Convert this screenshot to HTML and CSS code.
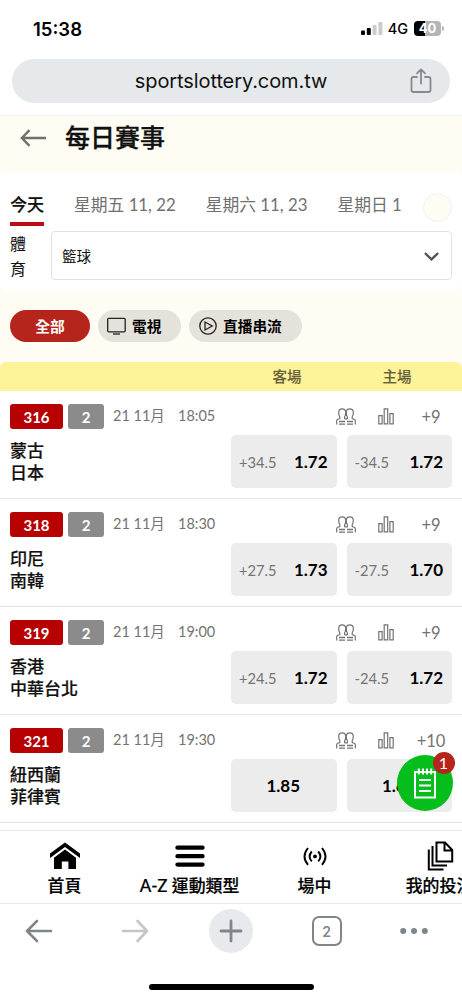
FILE: index.html
```
<!DOCTYPE html>
<html lang="zh-TW">
<head>
    <meta charset="UTF-8">
    <meta name="viewport" content="width=device-width, initial-scale=1.0">
    <title>每日賽事</title>
    <link rel="stylesheet" href="styles.css">
</head>
<body>
    <!-- Shared icons -->
    <svg class="sprite">
        <symbol id="icon-people" viewBox="0 0 20 17">
            <path d="M.7 16.500v-3.700q0-1.200 1.200-1.600l1.900-.6V8.800C3 7.900 2.700 6.500 2.700 4.600 2.700 2 4 .8 6.200.8s3.500 1.200 3.500 3.800c0 1.900-.3 3.300-1.100 4.200v1.800l1.400.5 1.400-.5V8.800c-.8-.9-1.100-2.300-1.100-4.200 0-2.600 1.300-3.800 3.500-3.800s3.500 1.200 3.500 3.800c0 1.900-.3 3.300-1.100 4.200v1.800l1.900.6q1.200.4 1.200 1.600v3.700" fill="none" stroke="currentColor" stroke-width="1.200"/>
            <path d="M3 13.500h6M3 16.200h6M11 13.500h6M11 16.200h6" fill="none" stroke="currentColor" stroke-width="1.300"/>
        </symbol>
        <symbol id="icon-stats" viewBox="0 0 16 17">
            <path d="M.8 7.700h3.300v8.200H.8zM6.200.8h3.500v15.100H6.200zM11.900 5.700h3.300v10.200h-3.300z" fill="none" stroke="currentColor" stroke-width="1.200"/>
        </symbol>
    </svg>

    <div class="phone">
        <div class="status-bar">
            <span class="clock">15:38</span>
            <div class="status-right">
                <svg width="22" height="14" viewBox="0 0 22 14">
                    <rect x="0" y="8.500" width="4" height="4.500" rx="1"/>
                    <rect x="5.800" y="6" width="4" height="7" rx="1"/>
                    <rect x="11.600" y="3" width="4" height="10" rx="1" fill="#ccc"/>
                    <rect x="17.400" y="0" width="4" height="13" rx="1" fill="#ccc"/>
                </svg>
                <span class="network">4G</span>
                <span class="battery">40</span>
                <span class="battery-tip"></span>
            </div>
        </div>

        <div class="address-bar">
            <span>sportslottery.com.tw</span>
            <svg class="share" width="22" height="26" viewBox="0 0 22 26" fill="none" stroke="#858a90" stroke-width="1.800" stroke-linecap="round" stroke-linejoin="round">
                <path d="M7 9H3.500Q1.500 9 1.500 11v11q0 2 2 2h15q2 0 2-2V11q0-2-2-2H15M11 15.500V1.500M7 5.300l4-3.900 4 3.900"/>
            </svg>
        </div>

        <main class="page">
            <header class="page-header">
                <svg width="27" height="18" viewBox="0 0 27 18" fill="none" stroke="#706f6a" stroke-width="2.400">
                    <path d="M26 9H2M9.500 1.200L1.900 9l7.600 7.800"/>
                </svg>
                <h1>每日賽事</h1>
            </header>

            <section class="panel">
                <div class="tabs">
                    <span class="tab active">今天</span>
                    <span class="tab">星期五 11, 22</span>
                    <span class="tab">星期六 11, 23</span>
                    <span class="tab">星期日 1</span>
                    <span class="tab-next"></span>
                </div>
                <div class="sport">
                    <label>體育</label>
                    <div class="select">
                        <span>籃球</span>
                        <svg width="15" height="9" viewBox="0 0 15 9" fill="none" stroke="#555" stroke-width="2.400">
                            <path d="M.9 1l6.600 6.400L14.100 1"/>
                        </svg>
                    </div>
                </div>
            </section>

            <div class="filters">
                <span class="pill pill-all">全部</span>
                <span class="pill pill-tv">
                    <svg width="19" height="18" viewBox="0 0 19 18" fill="none" stroke="#222" stroke-width="1.300">
                        <rect x=".7" y="1.300" width="17.500" height="13.500" rx="1"/>
                        <path d="M6 17h7"/>
                    </svg>
                    電視
                </span>
                <span class="pill pill-live">
                    <svg width="18" height="18" viewBox="0 0 18 18" fill="none" stroke="#222" stroke-width="1.300">
                        <circle cx="9" cy="9" r="8.200"/>
                        <path d="M6 5v8l7.200-4z"/>
                    </svg>
                    直播串流
                </span>
            </div>

            <div class="table-head">
                <span>客場</span>
                <span>主場</span>
            </div>

            <div class="matches">
                <article class="match">
                    <div class="match-top">
                        <span class="code">316</span>
                        <span class="min">2</span>
                        <span class="date">21 11月</span>
                        <span class="time">18:05</span>
                        <svg class="people"><use href="#icon-people"/></svg>
                        <svg class="stats"><use href="#icon-stats"/></svg>
                        <span class="more">+9</span>
                    </div>
                    <div class="match-main">
                        <div class="teams">蒙古<br>日本</div>
                        <div class="odd"><span>+34.5</span><b>1.72</b></div>
                        <div class="odd"><span>-34.5</span><b>1.72</b></div>
                    </div>
                </article>

                <article class="match">
                    <div class="match-top">
                        <span class="code">318</span>
                        <span class="min">2</span>
                        <span class="date">21 11月</span>
                        <span class="time">18:30</span>
                        <svg class="people"><use href="#icon-people"/></svg>
                        <svg class="stats"><use href="#icon-stats"/></svg>
                        <span class="more">+9</span>
                    </div>
                    <div class="match-main">
                        <div class="teams">印尼<br>南韓</div>
                        <div class="odd"><span>+27.5</span><b>1.73</b></div>
                        <div class="odd"><span>-27.5</span><b>1.70</b></div>
                    </div>
                </article>

                <article class="match">
                    <div class="match-top">
                        <span class="code">319</span>
                        <span class="min">2</span>
                        <span class="date">21 11月</span>
                        <span class="time">19:00</span>
                        <svg class="people"><use href="#icon-people"/></svg>
                        <svg class="stats"><use href="#icon-stats"/></svg>
                        <span class="more">+9</span>
                    </div>
                    <div class="match-main">
                        <div class="teams">香港<br>中華台北</div>
                        <div class="odd"><span>+24.5</span><b>1.72</b></div>
                        <div class="odd"><span>-24.5</span><b>1.72</b></div>
                    </div>
                </article>

                <article class="match">
                    <div class="match-top">
                        <span class="code">321</span>
                        <span class="min">2</span>
                        <span class="date">21 11月</span>
                        <span class="time">19:30</span>
                        <svg class="people"><use href="#icon-people"/></svg>
                        <svg class="stats"><use href="#icon-stats"/></svg>
                        <span class="more">+10</span>
                    </div>
                    <div class="match-main">
                        <div class="teams">紐西蘭<br>菲律賓</div>
                        <div class="odd single"><b>1.85</b></div>
                        <div class="odd single"><b>1.60</b></div>
                    </div>
                </article>
            </div>
        </main>

        <nav class="site-nav">
            <div class="nav-item">
                <svg width="30" height="30" viewBox="0 0 30 30">
                    <path d="M15 1.500L0 12.600v4.300L15 5.900l15 11v-4.300z"/>
                    <path d="M15 8.600L4 16.700V28h7.800v-7.500h6.600V28H26V16.700z"/>
                </svg>
                <span>首頁</span>
            </div>
            <div class="nav-item">
                <svg width="30" height="30" viewBox="0 0 30 30" fill="none" stroke="#000" stroke-width="4.200" stroke-linecap="round">
                    <path d="M2.400 6.700h25.200M2.400 15.200h25.200M2.400 23.600h25.200"/>
                </svg>
                <span>A-Z 運動類型</span>
            </div>
            <div class="nav-item">
                <svg width="30" height="30" viewBox="0 0 30 30" fill="none" stroke="#000" stroke-width="1.900">
                    <circle cx="15" cy="15.400" r="1.900" fill="#000" stroke="none"/>
                    <path d="M11.800 10.500q-4.400 4.900 0 9.800M18.200 10.500q4.400 4.900 0 9.800M8 7q-7 8.400 0 16.800M22 7q7 8.400 0 16.800"/>
                </svg>
                <span>場中</span>
            </div>
            <div class="nav-item">
                <svg width="30" height="30" viewBox="0 0 30 30" fill="none" stroke="#000" stroke-width="2">
                    <path d="M11.500 1.500H20l7.200 7.500v11.500H11.500zM19.500 1.500v8h7.700M7.500 5v19.500H22M3.800 8.500v20H18.500"/>
                </svg>
                <span>我的投注</span>
            </div>
            <div class="betslip">
                <svg width="24" height="32" viewBox="0 0 24 32" fill="none" stroke="#fff" stroke-width="2">
                    <path d="M2 5h20v25.500H2z"/>
                    <path d="M5.800 1.500v6M10 1.500v6M14 1.500v6M18.200 1.500v6M6 13h12M6 18.500h12M6 24h12"/>
                </svg>
                <span class="count">1</span>
            </div>
        </nav>

        <footer class="browser-bar">
            <svg width="28" height="24" viewBox="0 0 28 24" fill="none" stroke="#7f868b" stroke-width="2.600" stroke-linecap="round" stroke-linejoin="round">
                <path d="M26 12H2M12 2L2 12l10 10"/>
            </svg>
            <svg width="28" height="24" viewBox="0 0 28 24" fill="none" stroke="#c6c6c6" stroke-width="2.600" stroke-linecap="round" stroke-linejoin="round">
                <path d="M2 12h24M16.500 2L26 12l-9.500 10"/>
            </svg>
            <span class="new-tab">
                <svg width="26" height="26" viewBox="0 0 26 26" fill="none" stroke="#7f868b" stroke-width="2.800" stroke-linecap="round">
                    <path d="M13 3v20M3 13h20"/>
                </svg>
            </span>
            <span class="tab-count">2</span>
            <svg width="28" height="8" viewBox="0 0 28 8" fill="#7f868b">
                <circle cx="3.200" cy="4" r="3"/>
                <circle cx="14" cy="4" r="3"/>
                <circle cx="24.800" cy="4" r="3"/>
            </svg>
        </footer>
        <div class="home-indicator"></div>
    </div>
</body>
</html>
```
FILE: styles.css
```
* {
    box-sizing: border-box;
}

body {
    margin: 0;
    background-color: #fff;
    font-family: Lato, 'Noto Sans CJK TC', sans-serif;
    color: #111;
}

svg {
    flex: none;
    display: block;
}

.sprite {
    display: none;
}

.phone {
    width: 462px;
    height: 1000px;
    display: flex;
    flex-direction: column;
    overflow: hidden;
}

/* Status bar */
.status-bar {
    flex: none;
    height: 59px;
    display: flex;
    justify-content: space-between;
    align-items: center;
    padding: 0 18px 2px 33px;
    font-family: Inter, sans-serif;
    color: #000;
}

.clock {
    font-size: 18.5px;
    font-weight: 600;
}

.status-right {
    display: flex;
    align-items: center;
}

.network {
    font-size: 14.5px;
    font-weight: 500;
    margin: 0 6px 0 5px;
}

.battery {
    width: 27px;
    height: 15px;
    border-radius: 4px;
    background: linear-gradient(to right, #000 40%, #b5b5b5 40%);
    color: #fff;
    font-size: 13px;
    font-weight: 700;
    line-height: 15px;
    text-align: center;
}

.battery-tip {
    width: 2px;
    height: 5px;
    margin-left: 1px;
    border-radius: 0 2px 2px 0;
    background-color: #b5b5b5;
}

/* Address */
.address-bar {
    flex: none;
    height: 44px;
    margin: 0 12px 12px;
    padding: 0 18px 1px 40px;
    border-radius: 22px;
    background-color: #e6e9ec;
    display: flex;
    align-items: center;
    font-family: Inter, sans-serif;
    font-size: 20px;
    letter-spacing: -0.1px;
}

.address-bar span {
    flex: 1;
    text-align: center;
}

/* Page */
.page {
    flex: none;
    height: 715px;
    border-top: 1px solid #efeef0;
    background-color: #fffdf3;
    overflow: hidden;
}

.page-header {
    height: 57px;
    padding: 0 20px 14px;
    display: flex;
    align-items: center;
    gap: 18px;
}

.page-header h1 {
    margin: 0 0 2px;
    font-size: 25px;
    font-weight: 500;
    line-height: 36px;
    -webkit-text-stroke: 0.3px #111;
}

.panel {
    height: 117px;
    padding: 10px 10px 0;
    border-radius: 6px;
    background-color: #fff;
}

.tabs {
    height: 48px;
    display: flex;
    align-items: flex-start;
    gap: 30px;
    white-space: nowrap;
}

.tab {
    flex: none;
    height: 43px;
    font-size: 16.8px;
    line-height: 44px;
    color: #707070;
}

.tab.active {
    color: #111;
    font-size: 17px;
    font-weight: 500;
    border-bottom: 4px solid #bc0d14;
    -webkit-text-stroke: 0.2px #111;
}

.tab-next {
    flex: none;
    width: 29px;
    height: 29px;
    margin: 10px 0 0 -9px;
    border: 1px solid #f0f0f0;
    border-radius: 50%;
    background-color: #fffdf3;
}

.sport {
    display: flex;
}

.sport label {
    width: 41px;
    padding-right: 20px;
    font-size: 16px;
    line-height: 25px;
}

.select {
    flex: 1;
    height: 49px;
    padding: 0 12px 0 10px;
    border: 1px solid #e2e2e2;
    border-radius: 4px;
    display: flex;
    justify-content: space-between;
    align-items: center;
    font-size: 14.5px;
}

.select svg {
    margin-top: 2px;
}

.filters {
    height: 72px;
    padding: 20px 10px 0;
    display: flex;
    gap: 8px;
}

.pill {
    height: 32px;
    padding-bottom: 1px;
    border-radius: 16px;
    background-color: #e5e2dc;
    display: flex;
    align-items: center;
    gap: 6px;
    color: #000;
    font-size: 14.7px;
    font-weight: 700;
}

.pill svg {
    margin-top: 1px;
}

.pill-all {
    width: 80px;
    justify-content: center;
    background-color: #b6251b;
    color: #fff;
}

.pill-tv {
    width: 83px;
    padding-left: 9px;
}

.pill-live {
    width: 113px;
    padding-left: 10px;
}

.table-head {
    height: 29px;
    padding: 0 12px;
    border-radius: 6px 6px 0 0;
    background-color: #fff399;
    display: flex;
    justify-content: flex-end;
    gap: 4px;
    color: #665f39;
    font-size: 14.5px;
    font-weight: 500;
    line-height: 29px;
    -webkit-text-stroke: 0.1px #665f39;
}

.table-head span {
    width: 106px;
    text-align: center;
}

.matches {
    height: 440px;
    background-color: #fff;
}

.match {
    height: 108px;
    padding: 13px 10px 0;
    border-bottom: 1px solid #e4e4e4;
}

.match-top {
    height: 25px;
    display: flex;
    align-items: center;
    color: #737373;
}

.code,
.min {
    height: 25px;
    border-radius: 3px;
    color: #fff;
    font-size: 15px;
    font-weight: 700;
    line-height: 26px;
    text-align: center;
}

.code {
    width: 53px;
    background-color: #b70000;
}

.min {
    width: 36px;
    margin-left: 5px;
    background-color: #8b8b8b;
}

.date,
.time {
    font-size: 14.5px;
    line-height: 22px;
    padding-bottom: 1px;
}

.date {
    width: 65px;
    margin-left: 9px;
}

.people {
    width: 20px;
    height: 17px;
    margin-left: auto;
}

.stats {
    width: 16px;
    height: 17px;
    margin-left: 22px;
}

.more {
    width: 42px;
    margin-left: 16px;
    font-size: 16.5px;
    text-align: center;
}

.match-main {
    margin-top: 6px;
    display: flex;
    gap: 10px;
}

.teams {
    flex: 1;
    padding-top: 5px;
    font-size: 17px;
    font-weight: 500;
    line-height: 22px;
    -webkit-text-stroke: 0.2px #111;
}

.odd {
    width: 105.5px;
    height: 53px;
    padding: 0 9px 0 8px;
    border-radius: 5px;
    background-color: #ececec;
    display: flex;
    align-items: center;
    justify-content: space-between;
    color: #737373;
    font-size: 14.7px;
}

.odd b {
    color: #000;
    font-size: 17px;
}

.odd.single {
    justify-content: center;
}

/* Bottom navigation */
.site-nav {
    position: relative;
    flex: none;
    height: 74px;
    padding-left: 2px;
    border-top: 1px solid #e8e8e8;
    border-bottom: 1px solid #e8e8e8;
    background-color: #fff;
    display: flex;
}

.nav-item {
    flex: none;
    width: 125px;
    padding-top: 10px;
    display: flex;
    flex-direction: column;
    align-items: center;
    color: #000;
    font-size: 16.9px;
    font-weight: 500;
    line-height: 29px;
    white-space: nowrap;
    -webkit-text-stroke: 0.2px #000;
}

.betslip {
    position: absolute;
    top: -76px;
    right: 9.5px;
    width: 56px;
    height: 56px;
    border-radius: 50%;
    background-color: #05bd1b;
    display: flex;
    align-items: center;
    justify-content: center;
}

.count {
    position: absolute;
    top: -3px;
    right: -2px;
    width: 22px;
    height: 22px;
    border-radius: 50%;
    background-color: #b6251b;
    color: #fff;
    font-size: 16px;
    line-height: 22px;
    text-align: center;
}

/* Browser toolbar */
.browser-bar {
    flex: none;
    height: 54px;
    padding-right: 5px;
    display: grid;
    grid-template-columns: 78px 114px 78px 113px 61px;
    align-items: center;
    justify-items: center;
}

.new-tab {
    width: 44px;
    height: 44px;
    border-radius: 50%;
    background-color: #e8e9ed;
    display: flex;
    align-items: center;
    justify-content: center;
}

.tab-count {
    width: 30px;
    height: 30px;
    border: 2px solid #7f868b;
    border-radius: 7px;
    color: #7f868b;
    font-family: Inter, sans-serif;
    font-size: 14px;
    font-weight: 600;
    line-height: 27px;
    text-align: center;
}

.home-indicator {
    flex: none;
    width: 165px;
    height: 6px;
    margin: 26px auto 0;
    border-radius: 3px;
    background-color: #000;
}
```
